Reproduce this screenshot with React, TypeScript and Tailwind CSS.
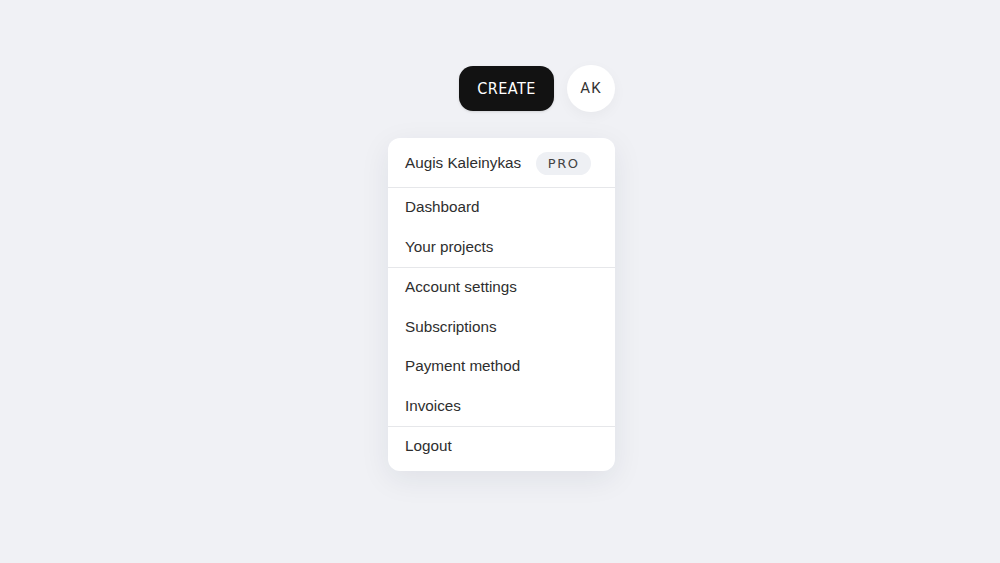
import { Fragment } from 'react'

const groups = [
  ['Dashboard', 'Your projects'],
  ['Account settings', 'Subscriptions', 'Payment method', 'Invoices'],
  ['Logout'],
]

export default function App() {
  return (
    <div className="min-h-[563px] w-full bg-[#f0f1f5] flex justify-center pt-[65px]" style={{ fontFamily: '"Liberation Sans", Arial, sans-serif' }}>
      <div className="w-[227px] ml-[3px] flex flex-col items-end">
        <div className="h-[47px] flex items-center gap-[13px]">
          <button
            className="h-[45px] w-[95px] rounded-[14px] bg-[#121212] text-white text-[16px] tracking-[0.03em] shadow-sm"
            style={{ fontFamily: '"DejaVu Sans Condensed", Roboto, sans-serif' }}
          >
            CREATE
          </button>
          <div
            className="h-[47px] w-[48px] rounded-full bg-white flex items-center justify-center text-[#333] text-[15px] tracking-[0.08em] shadow-[0_4px_14px_rgba(0,0,0,0.04)]"
            style={{ fontFamily: 'Roboto, sans-serif' }}
          >
            AK
          </div>
        </div>
        <div className="mt-[26px] w-[227px] rounded-[12px] bg-white shadow-[0_8px_30px_rgba(30,40,70,0.08)] text-[15.25px] text-[#2e2e2e] overflow-hidden">
          <div className="h-[49px] flex items-center px-[17px] gap-[15px] pt-[2px]">
            <span>Augis Kaleinykas</span>
            <span
              className="h-[23px] w-[55px] rounded-full bg-[#eef0f4] flex items-center justify-center text-[13px] text-[#444] tracking-[0.12em]"
              style={{ fontFamily: '"DejaVu Sans", sans-serif' }}
            >
              PRO
            </span>
          </div>
          {groups.map((g, i) => (
            <Fragment key={i}>
              <div className="h-px bg-[#e6e7ea]" />
              <div className={i === groups.length - 1 ? 'pb-1' : ''}>
                {g.map((item) => (
                  <div key={item} className="h-[39.5px] flex items-center px-[17px]">
                    {item}
                  </div>
                ))}
              </div>
            </Fragment>
          ))}
        </div>
      </div>
    </div>
  )
}
